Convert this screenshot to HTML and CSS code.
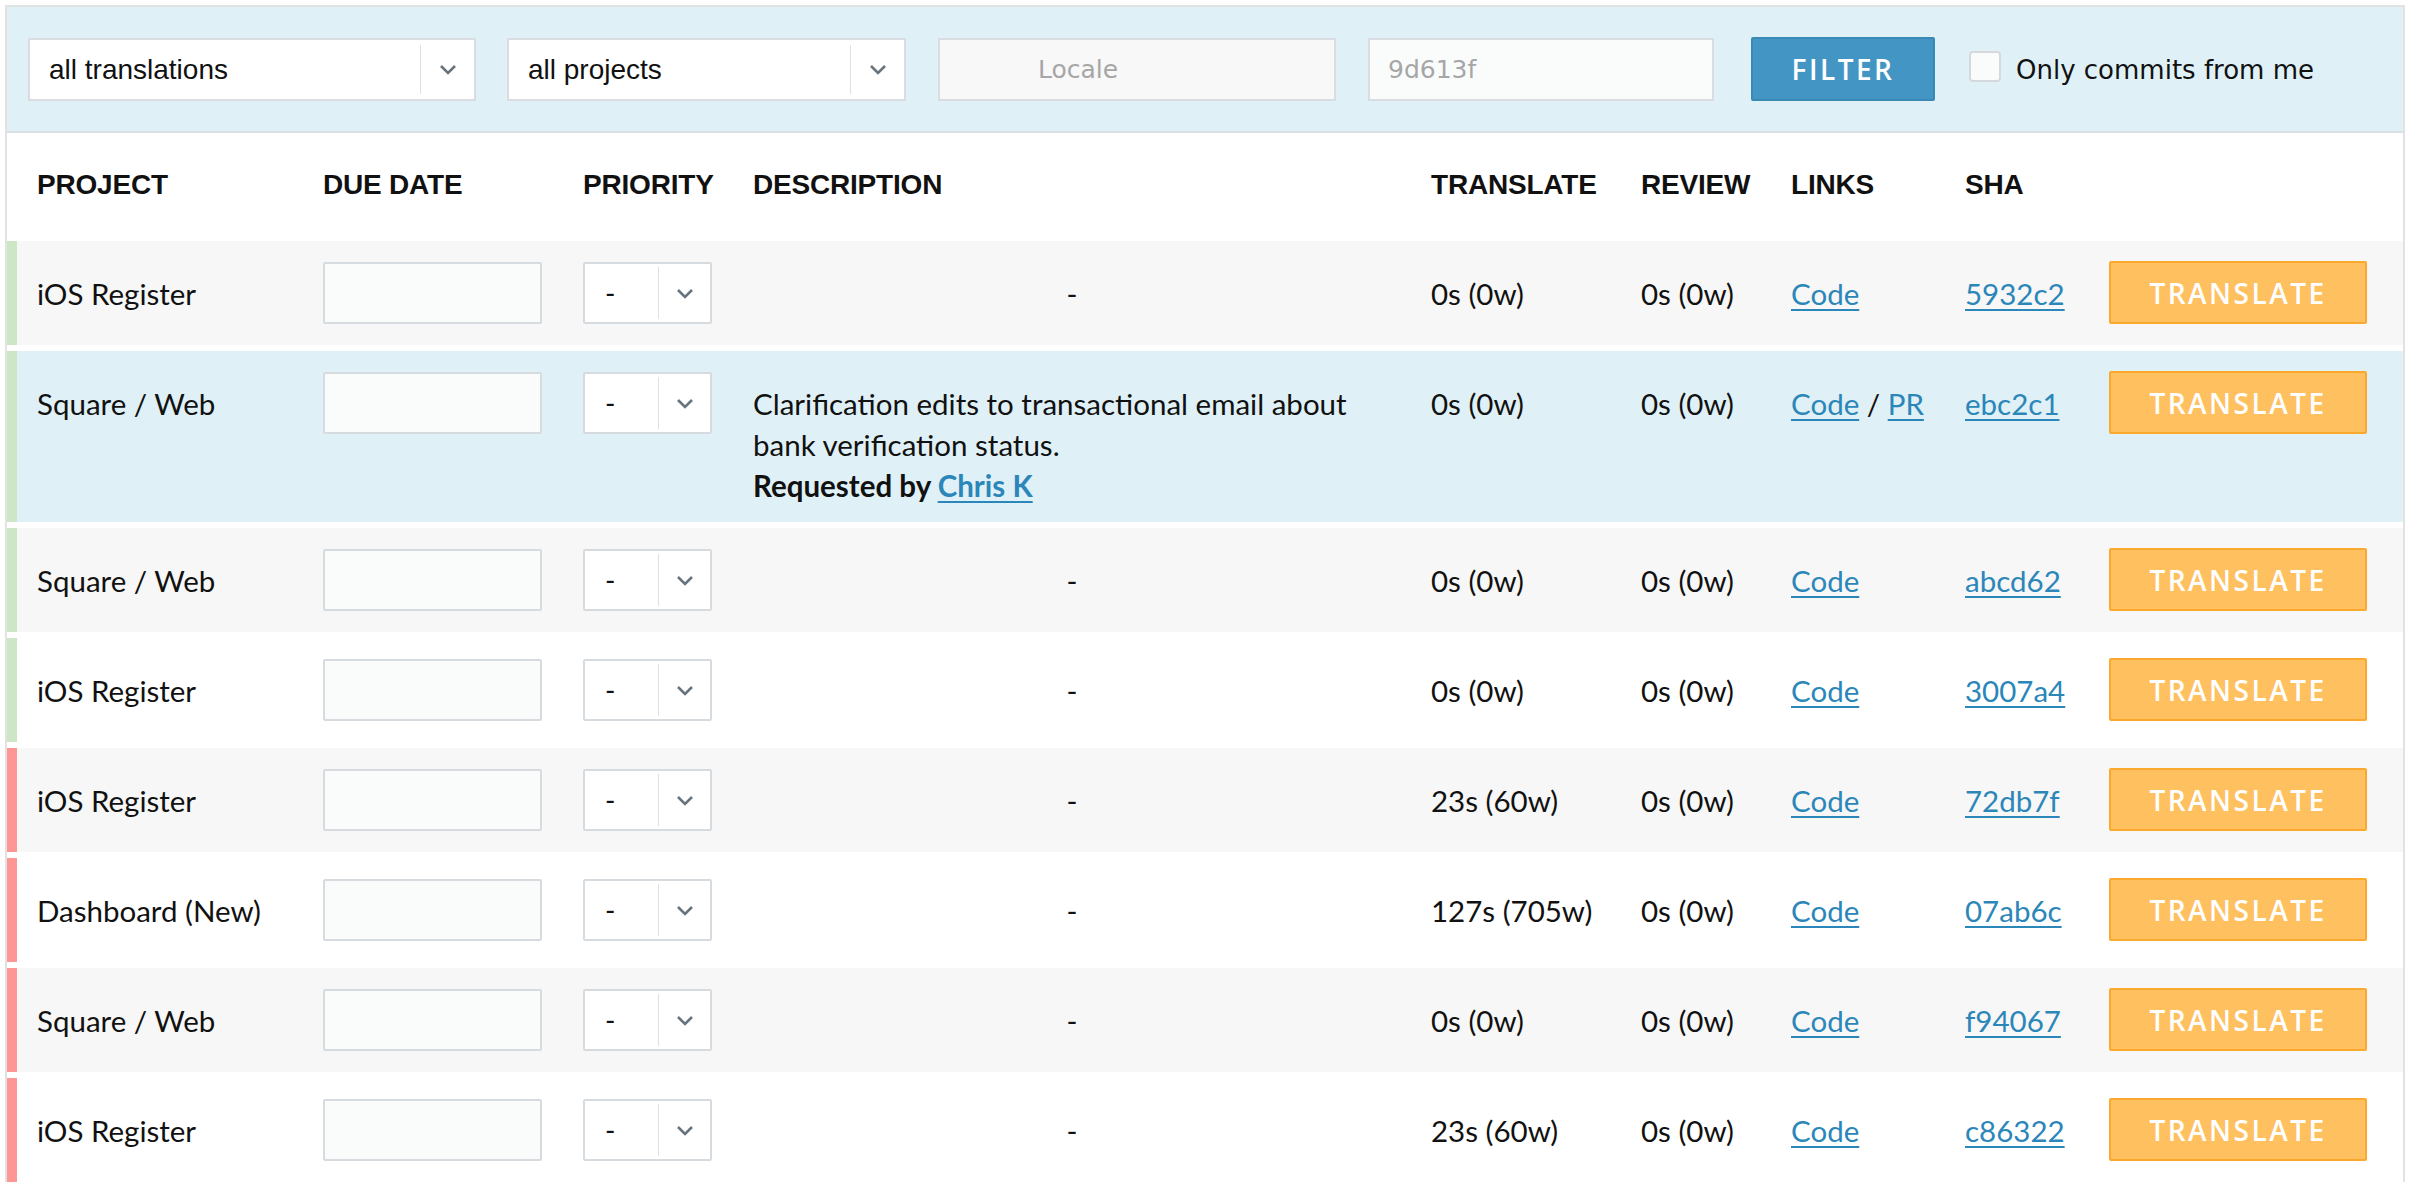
FILE: index.html
```html
<!DOCTYPE html>
<html lang="en">
<head>
<meta charset="utf-8">
<title>Translations</title>
<link rel="stylesheet" href="styles.css">
</head>
<body>
<div class="frame">
  <div class="filters">
    <div class="select sel-type">
      <span class="select-value">all translations</span>
      <span class="select-arrow"><svg width="18" height="11" viewBox="0 0 18 11"><path d="M2 2 L9 9 L16 2" fill="none" stroke="#68747d" stroke-width="2.6"/></svg></span>
    </div>
    <div class="select sel-project">
      <span class="select-value">all projects</span>
      <span class="select-arrow"><svg width="18" height="11" viewBox="0 0 18 11"><path d="M2 2 L9 9 L16 2" fill="none" stroke="#68747d" stroke-width="2.6"/></svg></span>
    </div>
    <div class="field field-locale"><span class="placeholder">Locale</span></div>
    <div class="field field-sha"><span class="placeholder">9d613f</span></div>
    <button class="btn-filter">FILTER</button>
    <span class="checkbox"></span>
    <span class="check-label">Only commits from me</span>
  </div>

  <div class="grid head">
    <div></div>
    <div class="c-project">PROJECT</div>
    <div>DUE DATE</div>
    <div>PRIORITY</div>
    <div>DESCRIPTION</div>
    <div>TRANSLATE</div>
    <div>REVIEW</div>
    <div>LINKS</div>
    <div>SHA</div>
    <div></div>
    <div></div>
  </div>

  <div class="grid row odd ok">
    <div class="bar"></div>
    <div class="t c-project">iOS Register</div>
    <div><div class="date"></div></div>
    <div><div class="prio"><span>-</span><span class="prio-arrow"><svg width="18" height="11" viewBox="0 0 18 11"><path d="M2 2 L9 9 L16 2" fill="none" stroke="#68747d" stroke-width="2.6"/></svg></span></div></div>
    <div class="t desc dash">-</div>
    <div class="t">0s (0w)</div>
    <div class="t">0s (0w)</div>
    <div class="t"><a href="#">Code</a></div>
    <div class="t"><a href="#">5932c2</a></div>
    <div><button class="btn-tr">TRANSLATE</button></div>
    <div></div>
  </div>

  <div class="grid row sel ok">
    <div class="bar"></div>
    <div class="t c-project">Square / Web</div>
    <div><div class="date"></div></div>
    <div><div class="prio"><span>-</span><span class="prio-arrow"><svg width="18" height="11" viewBox="0 0 18 11"><path d="M2 2 L9 9 L16 2" fill="none" stroke="#68747d" stroke-width="2.6"/></svg></span></div></div>
    <div class="t desc">Clarification edits to transactional email about<br>bank verification status.<br><b>Requested by <a href="#">Chris K</a></b></div>
    <div class="t">0s (0w)</div>
    <div class="t">0s (0w)</div>
    <div class="t"><a href="#">Code</a> / <a href="#">PR</a></div>
    <div class="t"><a href="#">ebc2c1</a></div>
    <div><button class="btn-tr">TRANSLATE</button></div>
    <div></div>
  </div>

  <div class="grid row odd ok">
    <div class="bar"></div>
    <div class="t c-project">Square / Web</div>
    <div><div class="date"></div></div>
    <div><div class="prio"><span>-</span><span class="prio-arrow"><svg width="18" height="11" viewBox="0 0 18 11"><path d="M2 2 L9 9 L16 2" fill="none" stroke="#68747d" stroke-width="2.6"/></svg></span></div></div>
    <div class="t desc dash">-</div>
    <div class="t">0s (0w)</div>
    <div class="t">0s (0w)</div>
    <div class="t"><a href="#">Code</a></div>
    <div class="t"><a href="#">abcd62</a></div>
    <div><button class="btn-tr">TRANSLATE</button></div>
    <div></div>
  </div>

  <div class="grid row even ok">
    <div class="bar"></div>
    <div class="t c-project">iOS Register</div>
    <div><div class="date"></div></div>
    <div><div class="prio"><span>-</span><span class="prio-arrow"><svg width="18" height="11" viewBox="0 0 18 11"><path d="M2 2 L9 9 L16 2" fill="none" stroke="#68747d" stroke-width="2.6"/></svg></span></div></div>
    <div class="t desc dash">-</div>
    <div class="t">0s (0w)</div>
    <div class="t">0s (0w)</div>
    <div class="t"><a href="#">Code</a></div>
    <div class="t"><a href="#">3007a4</a></div>
    <div><button class="btn-tr">TRANSLATE</button></div>
    <div></div>
  </div>

  <div class="grid row odd late">
    <div class="bar"></div>
    <div class="t c-project">iOS Register</div>
    <div><div class="date"></div></div>
    <div><div class="prio"><span>-</span><span class="prio-arrow"><svg width="18" height="11" viewBox="0 0 18 11"><path d="M2 2 L9 9 L16 2" fill="none" stroke="#68747d" stroke-width="2.6"/></svg></span></div></div>
    <div class="t desc dash">-</div>
    <div class="t">23s (60w)</div>
    <div class="t">0s (0w)</div>
    <div class="t"><a href="#">Code</a></div>
    <div class="t"><a href="#">72db7f</a></div>
    <div><button class="btn-tr">TRANSLATE</button></div>
    <div></div>
  </div>

  <div class="grid row even late">
    <div class="bar"></div>
    <div class="t c-project">Dashboard (New)</div>
    <div><div class="date"></div></div>
    <div><div class="prio"><span>-</span><span class="prio-arrow"><svg width="18" height="11" viewBox="0 0 18 11"><path d="M2 2 L9 9 L16 2" fill="none" stroke="#68747d" stroke-width="2.6"/></svg></span></div></div>
    <div class="t desc dash">-</div>
    <div class="t">127s (705w)</div>
    <div class="t">0s (0w)</div>
    <div class="t"><a href="#">Code</a></div>
    <div class="t"><a href="#">07ab6c</a></div>
    <div><button class="btn-tr">TRANSLATE</button></div>
    <div></div>
  </div>

  <div class="grid row odd late">
    <div class="bar"></div>
    <div class="t c-project">Square / Web</div>
    <div><div class="date"></div></div>
    <div><div class="prio"><span>-</span><span class="prio-arrow"><svg width="18" height="11" viewBox="0 0 18 11"><path d="M2 2 L9 9 L16 2" fill="none" stroke="#68747d" stroke-width="2.6"/></svg></span></div></div>
    <div class="t desc dash">-</div>
    <div class="t">0s (0w)</div>
    <div class="t">0s (0w)</div>
    <div class="t"><a href="#">Code</a></div>
    <div class="t"><a href="#">f94067</a></div>
    <div><button class="btn-tr">TRANSLATE</button></div>
    <div></div>
  </div>

  <div class="grid row even late">
    <div class="bar"></div>
    <div class="t c-project">iOS Register</div>
    <div><div class="date"></div></div>
    <div><div class="prio"><span>-</span><span class="prio-arrow"><svg width="18" height="11" viewBox="0 0 18 11"><path d="M2 2 L9 9 L16 2" fill="none" stroke="#68747d" stroke-width="2.6"/></svg></span></div></div>
    <div class="t desc dash">-</div>
    <div class="t">23s (60w)</div>
    <div class="t">0s (0w)</div>
    <div class="t"><a href="#">Code</a></div>
    <div class="t"><a href="#">c86322</a></div>
    <div><button class="btn-tr">TRANSLATE</button></div>
    <div></div>
  </div>
</div>
</body>
</html>
```

FILE: styles.css
```css
* { box-sizing: border-box; }
html, body { margin: 0; padding: 0; background: #fff; }
body { font-family: "Lato", "Open Sans", sans-serif; color: #111; }

.frame {
  margin: 5px 0 0 5px;
  width: 2400px;
  border: 2px solid #e2e2e2;
  border-bottom: none;
  background: #fff;
}

/* filter bar */
.filters {
  height: 126px;
  background: #dff0f6;
  border-bottom: 2px solid #d9dfe2;
  display: flex;
  align-items: flex-start;
  padding: 31px 0 0 21px;
}
.select {
  height: 63px;
  background: #fff;
  border: 2px solid #d9dde1;
  display: flex;
  align-items: center;
  font-family: "Liberation Sans", Arial, sans-serif;
  font-size: 28px;
  color: #111;
}
.sel-type { width: 448px; }
.sel-project { width: 399px; margin-left: 31px; }
.select-value { flex: 1; padding-left: 19px; }
.select-arrow {
  width: 54px;
  height: 49px;
  border-left: 1px solid #dde1e4;
  display: flex;
  align-items: center;
  justify-content: center;
}
.field {
  height: 63px;
  border: 2px solid #d9dde1;
  display: flex;
  align-items: center;
  font-family: "DejaVu Sans", sans-serif;
  font-size: 25px;
}
.placeholder { color: #a6a6a6; }
.field-locale { width: 398px; margin-left: 32px; background: #f8f8f8; padding-left: 98px; }
.field-sha { width: 346px; margin-left: 32px; background: #fafcfc; padding-left: 18px; }
.btn-filter {
  margin-left: 37px;
  margin-top: -1px;
  width: 184px;
  height: 64px;
  background: #4396c3;
  border: 2px solid #3a88b5;
  border-radius: 2px;
  color: #fff;
  font-family: "Open Sans", sans-serif;
  font-weight: 600;
  font-size: 28px;
  letter-spacing: 2.5px;
  padding: 0;
}
.checkbox {
  margin-left: 34px;
  margin-top: 13px;
  width: 32px;
  height: 31px;
  background: #fafcfc;
  border: 2px solid #d5d9dd;
  border-radius: 4px;
}
.check-label {
  margin-left: 15px;
  margin-top: 17px;
  font-family: "DejaVu Sans", sans-serif;
  font-size: 26px;
  color: #111;
}

/* grid */
.grid {
  display: grid;
  grid-template-columns: 10px 306px 260px 170px 678px 210px 150px 174px 144px 258px 36px;
}
.c-project { padding-left: 20px; }

.head {
  height: 102px;
  align-items: center;
  font-family: "Liberation Sans", Arial, sans-serif;
  font-weight: bold;
  font-size: 28px;
  letter-spacing: -0.2px;
  color: #111;
  padding-top: 2px;
}

.row {
  margin-top: 6px;
  align-items: start;
  padding: 21px 0 16px 0;
  font-size: 29.5px;
  line-height: 41px;
  position: relative;
}
.odd { background: #f7f7f7; }
.even { background: #fff; }
.sel { background: #dff0f6; }
.row::before {
  content: "";
  position: absolute;
  left: 0; top: 0; bottom: 0;
  width: 10px;
}
.ok::before { background: #cde6c5; }
.late::before { background: #ff9696; }

.t { padding-top: 11px; }
.desc.dash { text-align: center; padding-right: 40px; }

.date {
  width: 219px;
  height: 62px;
  background: #fafcfc;
  border: 2px solid #d6dbe0;
  border-radius: 2px;
  margin-bottom: 5px;
}
.prio {
  width: 129px;
  height: 62px;
  background: #fff;
  border: 2px solid #d6dbe0;
  border-radius: 2px;
  display: flex;
  align-items: center;
}
.prio > span:first-child { width: 73px; padding-left: 20px; font-size: 28px; }
.prio-arrow {
  flex: 1;
  height: 52px;
  border-left: 1px solid #dde1e4;
  display: flex;
  align-items: center;
  justify-content: center;
}

a { color: #2b86b9; text-decoration: underline; text-decoration-thickness: 2px; text-underline-offset: 4px; }

.btn-tr {
  width: 258px;
  height: 63px;
  margin-top: -1px;
  background: #ffc05f;
  border: 2px solid #fba92e;
  border-radius: 2px;
  color: #fff;
  font-family: "Open Sans", sans-serif;
  font-weight: 600;
  font-size: 28px;
  letter-spacing: 2.5px;
  padding: 0;
}
```
